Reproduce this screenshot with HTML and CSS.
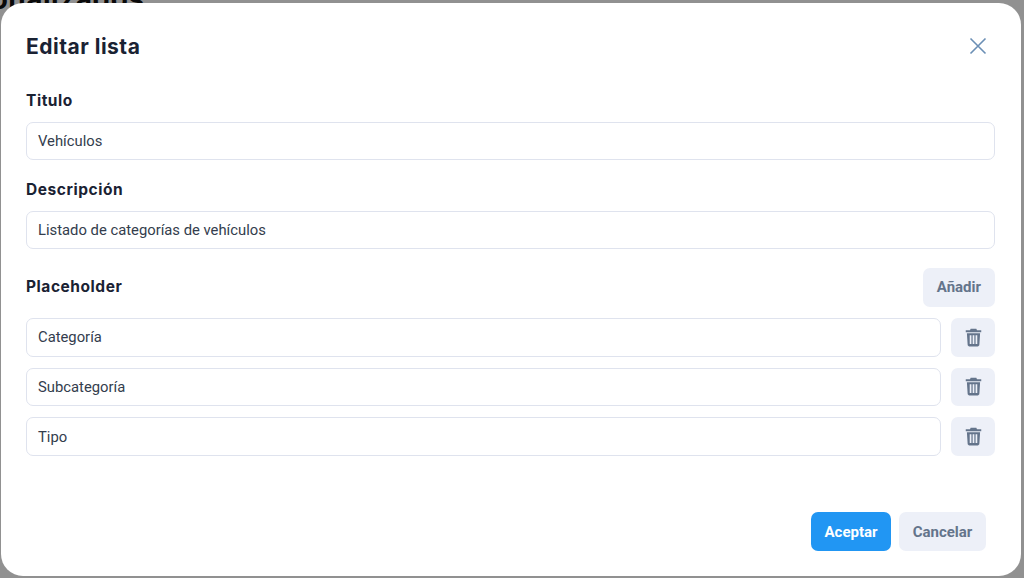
FILE: index.html
```html
<!DOCTYPE html>
<html lang="es">
<head>
<meta charset="utf-8">
<title>Editar lista</title>
<link rel="stylesheet" href="styles.css">
</head>
<body>
<div class="page-bg"><span class="bg-title">Personalizados</span></div>
<div class="backdrop"></div>
<div class="modal">
  <header class="modal-head">
    <h2 class="modal-title">Editar lista</h2>
    <button class="close" aria-label="Cerrar">
      <svg width="24" height="24" viewBox="0 0 24 24" fill="none" stroke="#6b8fb5" stroke-width="1.6"><path d="M4.5 4.5 19.5 19.5M19.5 4.5 4.5 19.5"/></svg>
    </button>
  </header>
  <label class="label">Titulo</label>
  <div class="input">Vehículos</div>
  <label class="label label-2">Descripción</label>
  <div class="input">Listado de categorías de vehículos</div>
  <div class="ph-head">
    <span class="label-inline">Placeholder</span>
    <button class="btn btn-soft">Añadir</button>
  </div>
  <div class="rows">
    <div class="row">
      <div class="input grow">Categoría</div>
      <button class="btn btn-soft btn-icon" aria-label="Eliminar"><svg width="17" height="19" viewBox="0 0 18 20"><path fill="#64748b" d="M6 0.8h6l.7 1.6H17.2v2H.8v-2h4.5zM2 5.4h14l-.8 12.4c-.1 1-.8 1.6-1.8 1.6H4.6c-1 0-1.7-.6-1.8-1.6zM5 7.6v9.4h1.8V7.6zm3.1 0v9.4h1.8V7.6zm3.1 0v9.4H13V7.6z" fill-rule="evenodd"/></svg></button>
    </div>
    <div class="row">
      <div class="input grow">Subcategoría</div>
      <button class="btn btn-soft btn-icon" aria-label="Eliminar"><svg width="17" height="19" viewBox="0 0 18 20"><path fill="#64748b" d="M6 0.8h6l.7 1.6H17.2v2H.8v-2h4.5zM2 5.4h14l-.8 12.4c-.1 1-.8 1.6-1.8 1.6H4.6c-1 0-1.7-.6-1.8-1.6zM5 7.6v9.4h1.8V7.6zm3.1 0v9.4h1.8V7.6zm3.1 0v9.4H13V7.6z" fill-rule="evenodd"/></svg></button>
    </div>
    <div class="row">
      <div class="input grow">Tipo</div>
      <button class="btn btn-soft btn-icon" aria-label="Eliminar"><svg width="17" height="19" viewBox="0 0 18 20"><path fill="#64748b" d="M6 0.8h6l.7 1.6H17.2v2H.8v-2h4.5zM2 5.4h14l-.8 12.4c-.1 1-.8 1.6-1.8 1.6H4.6c-1 0-1.7-.6-1.8-1.6zM5 7.6v9.4h1.8V7.6zm3.1 0v9.4h1.8V7.6zm3.1 0v9.4H13V7.6z" fill-rule="evenodd"/></svg></button>
    </div>
  </div>
  <footer class="modal-foot">
    <button class="btn btn-primary">Aceptar</button>
    <button class="btn btn-soft btn-cancel">Cancelar</button>
  </footer>
</div>
</body>
</html>
```
FILE: styles.css
```css
* { box-sizing: border-box; }
html, body { margin: 0; height: 100%; overflow: hidden; }
body { background: #fff; font-family: Roboto, "Liberation Sans", sans-serif; color: #1e293b; }
.page-bg { height: 100%; overflow: hidden; }
.bg-title { display: block; margin: -17px 0 0 -73px; font: 700 28px/32px Inter, sans-serif; color: #111; letter-spacing: .5px; }
.backdrop { position: fixed; inset: 0; background: rgba(0, 0, 0, .43); }
.modal {
  position: fixed; left: 1px; top: 3px; width: 1020px; height: 573px;
  background: #fff; border-radius: 22px; padding: 0 26px 0 25px;
  display: flex; flex-direction: column;
}
.modal-head { display: flex; justify-content: space-between; align-items: center; height: 86px; }
.modal-title { margin: 1px 0 0; font: 650 21px/28px Inter, sans-serif; letter-spacing: .5px; color: #1a2233; }
.close { border: 0; background: none; padding: 0; margin-right: 5px; width: 24px; height: 24px; display: flex; }
.label, .label-inline { display: block; font: 650 15.5px/22px Inter, sans-serif; letter-spacing: .55px; color: #1a2233; }
.label { margin-top: 1.4px; margin-bottom: 9.2px; }
.label-2 { margin-top: 19px; }
.input {
  height: 38.8px; border: 1px solid #dfe3ee; border-radius: 7px; background: #fff;
  padding: 0 11px; display: flex; align-items: center;
  font-size: 14.8px; color: #333d4d;
}
.grow { flex: 1; }
.ph-head { display: flex; justify-content: space-between; align-items: center; margin-top: 18.6px; }
.btn { border: 0; border-radius: 7px; height: 38.8px; font: 700 15px Roboto, sans-serif; padding: 0 14px; display: flex; align-items: center; justify-content: center; }
.btn-soft { background: #edf0f8; color: #64748b; }
.btn-primary { background: #2196f3; color: #fff; width: 80px; padding: 0; }
.btn-cancel { width: 87px; padding: 0; }
.btn-icon { width: 44px; padding: 0; flex: none; }
.rows { display: flex; flex-direction: column; gap: 11px; margin-top: 11px; }
.row { display: flex; gap: 10px; }
.modal-foot { margin-top: auto; margin-bottom: 25px; margin-right: 9px; display: flex; justify-content: flex-end; gap: 8px; }
```
